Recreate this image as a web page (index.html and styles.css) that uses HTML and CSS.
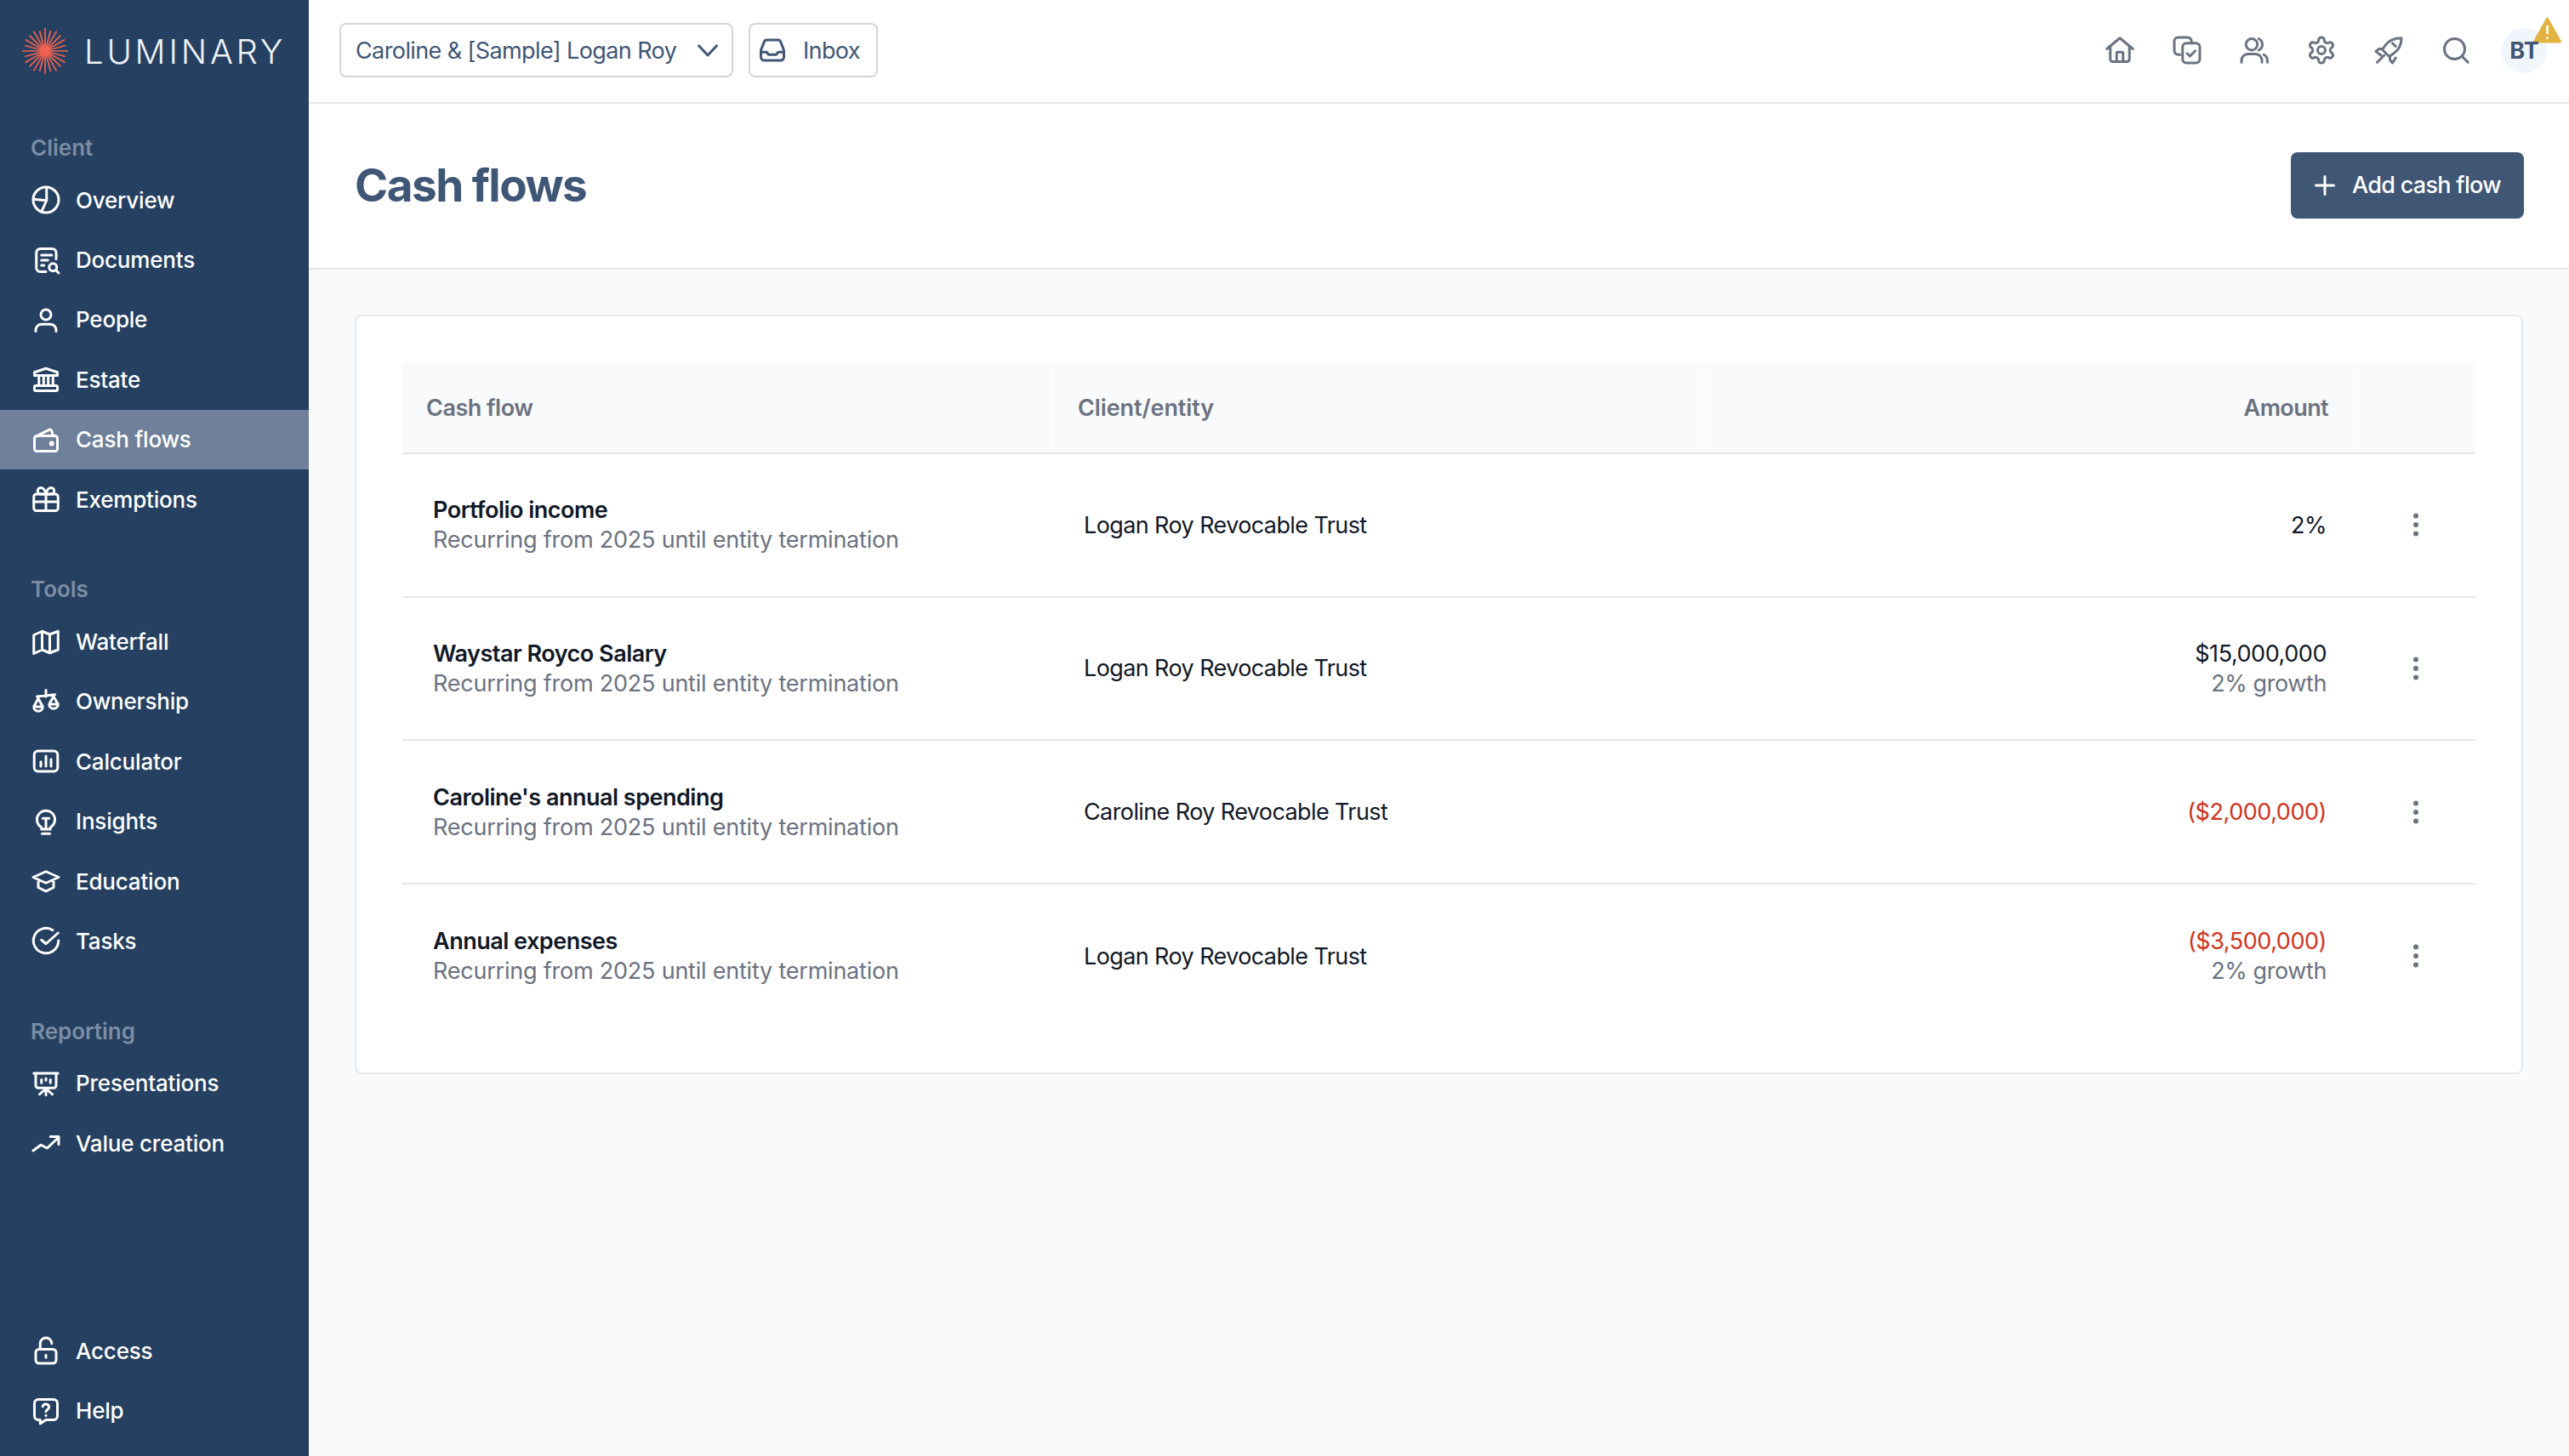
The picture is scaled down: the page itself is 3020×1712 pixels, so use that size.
FILE: index.html
```html
<!DOCTYPE html>
<html lang="en">

<head>
    <meta charset="UTF-8">
    <title>Cash flows</title>
    <link rel="stylesheet" href="styles.css">
</head>

<body>
    <aside class="sidebar">
        <div class="logo">
            <svg class="logo-mark" viewBox="0 0 54 54" stroke="#f0614f" stroke-width="1.7">
                <line x1="27" y1="0" x2="27" y2="54" />
                <line x1="20.5" y1="3" x2="33.5" y2="51" />
                <line x1="13.5" y1="3.6" x2="40.5" y2="50.4" />
                <line x1="8.6" y1="8.6" x2="45.4" y2="45.4" />
                <line x1="3.6" y1="13.5" x2="50.4" y2="40.5" />
                <line x1="3" y1="20.5" x2="51" y2="33.5" />
                <line x1="0" y1="27" x2="54" y2="27" />
                <line x1="3" y1="33.5" x2="51" y2="20.5" />
                <line x1="3.6" y1="40.5" x2="50.4" y2="13.5" />
                <line x1="8.6" y1="45.4" x2="45.4" y2="8.6" />
                <line x1="13.5" y1="50.4" x2="40.5" y2="3.6" />
                <line x1="20.5" y1="51" x2="33.5" y2="3" />
                <circle cx="27" cy="27" r="6" fill="#f0614f" stroke="none" />
            </svg>
            <span class="logo-text">LUMINARY</span>
        </div>

        <nav class="nav-group">
            <h3>Client</h3>
            <a class="nav-item">
                <svg class="icon" viewBox="0 0 24 24"><circle cx="12" cy="12" r="10" /><path d="M12.5 2.2V12.5L2.2 11.5M12.5 12.5L8.5 21.3" /></svg>
                Overview
            </a>
            <a class="nav-item">
                <svg class="icon" viewBox="0 0 24 24"><path d="M20 11V6a3 3 0 0 0-3-3H7.5a3 3 0 0 0-3 3v12a3 3 0 0 0 3 3H12M8.500 8h8M8.500 12h5M8.500 16h2" /><circle cx="17.5" cy="17.5" r="3" /><path d="M20 20l2 2" /></svg>
                Documents
            </a>
            <a class="nav-item">
                <svg class="icon" viewBox="0 0 24 24"><circle cx="12" cy="8" r="4" /><path d="M4 21v-1a4.5 4.5 0 0 1 4.5-4.5h7A4.5 4.5 0 0 1 20 20v1" /></svg>
                People
            </a>
            <a class="nav-item">
                <svg class="icon" viewBox="0 0 24 24"><path d="M3 9V6.5L12 3.500l9 3V9zM6.5 9.500v7M10.200 9.500v7M13.800 9.500v7M17.5 9.500v7" /><rect x="3" y="17" width="18" height="4" rx="1" /></svg>
                Estate
            </a>
            <a class="nav-item active">
                <svg class="icon" viewBox="0 0 24 24"><rect x="3" y="9" width="18" height="12" rx="2" /><path d="M4 9.500L14.500 4.200a1.500 1.500 0 0 1 2.100 1L17.5 9" /><circle cx="16.5" cy="15" r="1" /></svg>
                Cash flows
            </a>
            <a class="nav-item">
                <svg class="icon" viewBox="0 0 24 24"><rect x="2.5" y="8" width="19" height="13" rx="2" /><path d="M2.5 14h19M12 8v13M12 8H8a2.500 2.500 0 1 1 0-5c3 0 4 5 4 5zM12 8h4a2.500 2.500 0 1 0 0-5c-3 0-4 5-4 5z" /></svg>
                Exemptions
            </a>
        </nav>

        <nav class="nav-group">
            <h3>Tools</h3>
            <a class="nav-item">
                <svg class="icon" viewBox="0 0 24 24"><path d="M2.5 6.500L9 3.500l6 2.500 6.500-2.500V18L15 20.500 9 18l-6.500 3zM9 3.500V18M15 6v14.500" /></svg>
                Waterfall
            </a>
            <a class="nav-item">
                <svg class="icon" viewBox="0 0 24 24"><path d="M12 3v5M5 8l14-1.500M6 9.500L2.500 16a3.500 3.500 0 0 0 7 0zM2.500 16h7M18 8l-3.500 6a3.500 3.500 0 0 0 7 0zM14.500 14h7" /></svg>
                Ownership
            </a>
            <a class="nav-item">
                <svg class="icon" viewBox="0 0 24 24"><rect x="2.800" y="4" width="18.400" height="16" rx="3" /><path d="M8 12.500V16M12 8v8M16 10.500V16" /></svg>
                Calculator
            </a>
            <a class="nav-item">
                <svg class="icon" viewBox="0 0 24 24"><path d="M9 21.500h6M8.500 16.500a7 7 0 1 1 7 0v1.500h-7zM9.500 9.500h5M12 9.500v8" /></svg>
                Insights
            </a>
            <a class="nav-item">
                <svg class="icon" viewBox="0 0 24 24"><path d="M2 9l10-4.500L22 9l-10 4.500zM6 11v6l6 3 6-3v-6" /></svg>
                Education
            </a>
            <a class="nav-item">
                <svg class="icon" viewBox="0 0 24 24"><path d="M21.800 12a9.800 9.800 0 1 1-4.500-8.200M21.500 6L12 14.500l-3.500-3" /></svg>
                Tasks
            </a>
        </nav>

        <nav class="nav-group">
            <h3>Reporting</h3>
            <a class="nav-item">
                <svg class="icon" viewBox="0 0 24 24"><path d="M2.500 4h19M4 4v9.500a2 2 0 0 0 2 2h12a2 2 0 0 0 2-2V4M12 15.500v5.500M12 16l-5 4.500M12 16l5 4.500M8.500 9v2.500M12 8v1.500M15.500 9v2.500" /></svg>
                Presentations
            </a>
            <a class="nav-item">
                <svg class="icon" viewBox="0 0 24 24"><path d="M2 18l6-4.500 5 2.500 9-8.500M15.500 7H22v6" /></svg>
                Value creation
            </a>
        </nav>

        <nav class="nav-group nav-bottom">
            <a class="nav-item">
                <svg class="icon" viewBox="0 0 24 24"><rect x="4" y="11" width="16" height="11" rx="2.500" /><path d="M7.500 11V6.500a4.500 4.500 0 0 1 9 0M12 15.500v2" /></svg>
                Access
            </a>
            <a class="nav-item">
                <svg class="icon" viewBox="0 0 24 24"><path d="M6 3h12a3 3 0 0 1 3 3v10a3 3 0 0 1-3 3h-6l-4.500 3v-3H6a3 3 0 0 1-3-3V6a3 3 0 0 1 3-3zM9.500 8.500a2.500 2.500 0 0 1 4.900.6c0 1.700-2.400 1.900-2.400 3.400M12 15.500v.1" /></svg>
                Help
            </a>
        </nav>
    </aside>

    <div class="main">
        <header class="topbar">
            <button class="box-btn client-select">
                Caroline &amp; [Sample] Logan Roy
                <svg class="icon small" viewBox="0 0 24 24"><path d="M5 8.500l7 7.500 7-7.500" /></svg>
            </button>
            <button class="box-btn inbox">
                <svg class="icon" viewBox="0 0 24 24"><path d="M3 13.500h4.500l1.500 2h6l1.500-2H21" /><path d="M7.500 4h9a2 2 0 0 1 1.800 1.100L21 12v5.500a2.500 2.500 0 0 1-2.500 2.500h-13A2.500 2.500 0 0 1 3 17.500V12l2.700-6.900A2 2 0 0 1 7.500 4z" /></svg>
                Inbox
            </button>

            <div class="top-icons">
                <span class="top-icon"><svg class="icon" viewBox="0 0 24 24"><path d="M1.800 11L12 2.500 22.200 11M4.500 9v10a2 2 0 0 0 2 2h11a2 2 0 0 0 2-2V9M9.500 21v-6.500a1 1 0 0 1 1-1h3a1 1 0 0 1 1 1V21" /></svg></span>
                <span class="top-icon"><svg class="icon" viewBox="0 0 24 24"><path d="M6.500 15.500H5a3 3 0 0 1-3-3V5a3 3 0 0 1 3-3h7.500a3 3 0 0 1 3 3v1.500" /><rect x="8.500" y="6.500" width="13.500" height="15.500" rx="3" /><path d="M12 14.500l2.200 2.200 4.300-4.200" /></svg></span>
                <span class="top-icon"><svg class="icon" viewBox="0 0 24 24"><circle cx="10" cy="7.500" r="4.500" /><path d="M2 21.500V20a5 5 0 0 1 5-5h6a5 5 0 0 1 5 5v1.500M15.500 3a5 5 0 0 1 0 9M19.500 15.500a5 5 0 0 1 2.800 4.500v1.500" /></svg></span>
                <span class="top-icon"><svg class="icon" viewBox="0 0 24 24"><path d="M12.220 2h-.44a2 2 0 0 0-2 2v.18a2 2 0 0 1-1 1.730l-.43.250a2 2 0 0 1-2 0l-.15-.08a2 2 0 0 0-2.730.730l-.22.380a2 2 0 0 0 .730 2.730l.15.100a2 2 0 0 1 1 1.720v.510a2 2 0 0 1-1 1.740l-.15.090a2 2 0 0 0-.730 2.730l.22.380a2 2 0 0 0 2.730.730l.15-.08a2 2 0 0 1 2 0l.43.250a2 2 0 0 1 1 1.730V20a2 2 0 0 0 2 2h.44a2 2 0 0 0 2-2v-.18a2 2 0 0 1 1-1.730l.43-.25a2 2 0 0 1 2 0l.15.08a2 2 0 0 0 2.730-.730l.22-.39a2 2 0 0 0-.730-2.730l-.15-.08a2 2 0 0 1-1-1.740v-.5a2 2 0 0 1 1-1.740l.15-.09a2 2 0 0 0 .730-2.730l-.22-.38a2 2 0 0 0-2.730-.730l-.15.08a2 2 0 0 1-2 0l-.43-.25a2 2 0 0 1-1-1.730V4a2 2 0 0 0-2-2z" /><circle cx="12" cy="12" r="3" /></svg></span>
                <span class="top-icon"><svg class="icon" viewBox="0 0 24 24"><path d="M22 2.500c-5 0-9.500 1.500-12.500 5.500L7 11.500l5.500 5.500 3.500-2.500c4.500-3 6-7 6-12zM7.500 11H4.500l-2.500 2 4 3M13 16.500v3l2 2.500 2.500-4M3 21.500l5.500-5.500M15 6.500l2.500 2.500" /></svg></span>
                <span class="top-icon"><svg class="icon" viewBox="0 0 24 24"><circle cx="11" cy="11" r="8" /><path d="M21.500 21.500L16.800 16.800" /></svg></span>
                <span class="avatar">
                    <svg class="warning" viewBox="0 0 33 31"><path d="M16.500 2L31.500 29H1.500z" fill="#e3b341" stroke="#e3b341" stroke-width="3" stroke-linejoin="round" /><path d="M16.500 10v10M16.500 23.500v2.500" stroke="#fff6d8" stroke-width="3" /></svg>
                    <span class="avatar-text">BT</span>
                </span>
            </div>
        </header>

        <section class="page-head">
            <h1>Cash flows</h1>
            <button class="add-btn">
                <svg class="icon" viewBox="0 0 24 24"><path d="M12 5v14M5 12h14" /></svg>
                Add cash flow
            </button>
        </section>

        <section class="content">
            <div class="card">
                <div class="row head">
                    <div class="cell">Cash flow</div>
                    <div class="cell entity-head">Client/entity</div>
                    <div class="cell num">Amount</div>
                    <div class="cell"></div>
                </div>

                <div class="row">
                    <div class="cell">
                        <p class="name">Portfolio income</p>
                        <p class="sub">Recurring from 2025 until entity termination</p>
                    </div>
                    <div class="cell entity">Logan Roy Revocable Trust</div>
                    <div class="cell num">2%</div>
                    <div class="cell more"><svg class="icon dots" viewBox="0 0 24 24"><circle cx="12" cy="5" r="2" /><circle cx="12" cy="12" r="2" /><circle cx="12" cy="19" r="2" /></svg></div>
                </div>

                <div class="row">
                    <div class="cell">
                        <p class="name">Waystar Royco Salary</p>
                        <p class="sub">Recurring from 2025 until entity termination</p>
                    </div>
                    <div class="cell entity">Logan Roy Revocable Trust</div>
                    <div class="cell num">
                        <p>$15,000,000</p>
                        <p class="sub growth">2% growth</p>
                    </div>
                    <div class="cell more"><svg class="icon dots" viewBox="0 0 24 24"><circle cx="12" cy="5" r="2" /><circle cx="12" cy="12" r="2" /><circle cx="12" cy="19" r="2" /></svg></div>
                </div>

                <div class="row">
                    <div class="cell">
                        <p class="name">Caroline's annual spending</p>
                        <p class="sub">Recurring from 2025 until entity termination</p>
                    </div>
                    <div class="cell entity">Caroline Roy Revocable Trust</div>
                    <div class="cell num minus">($2,000,000)</div>
                    <div class="cell more"><svg class="icon dots" viewBox="0 0 24 24"><circle cx="12" cy="5" r="2" /><circle cx="12" cy="12" r="2" /><circle cx="12" cy="19" r="2" /></svg></div>
                </div>

                <div class="row last">
                    <div class="cell">
                        <p class="name">Annual expenses</p>
                        <p class="sub">Recurring from 2025 until entity termination</p>
                    </div>
                    <div class="cell entity">Logan Roy Revocable Trust</div>
                    <div class="cell num">
                        <p class="minus">($3,500,000)</p>
                        <p class="sub growth">2% growth</p>
                    </div>
                    <div class="cell more"><svg class="icon dots" viewBox="0 0 24 24"><circle cx="12" cy="5" r="2" /><circle cx="12" cy="12" r="2" /><circle cx="12" cy="19" r="2" /></svg></div>
                </div>
            </div>
        </section>
    </div>
</body>

</html>
```

FILE: styles.css
```css
* {
    box-sizing: border-box;
}

body {
    margin: 0;
    height: 1712px;
    display: flex;
    font-family: "Inter", "Liberation Sans", sans-serif;
    font-size: 27px;
    color: #111827;
    background-color: #f9fafb;
    overflow: hidden;
}

p,
h1,
h3 {
    margin: 0;
}

.icon {
    width: 36px;
    height: 36px;
    flex: none;
    fill: none;
    stroke: currentColor;
    stroke-width: 2;
    stroke-linecap: round;
    stroke-linejoin: round;
}

/* sidebar */
.sidebar {
    width: 363px;
    flex: none;
    display: flex;
    flex-direction: column;
    background-color: #254061;
    color: white;
    padding-bottom: 18px;
}

.logo {
    height: 120px;
    display: flex;
    align-items: center;
    padding-left: 26px;
    gap: 19px;
}

.logo-mark {
    width: 54px;
    height: 54px;
}

.logo-text {
    font-size: 40px;
    font-weight: 300;
    letter-spacing: 3.8px;
    color: #eef1f5;
}

.nav-group {
    margin-bottom: 52px;
}

.nav-group:nth-of-type(1) {
    margin-top: 35px;
}

.nav-group h3 {
    height: 38px;
    line-height: 38px;
    margin-bottom: 7px;
    padding-left: 36px;
    font-size: 26px;
    font-weight: 600;
    color: #7c8da4;
}

.nav-item {
    height: 70.4px;
    display: flex;
    align-items: center;
    gap: 17px;
    padding-left: 36px;
    font-weight: 500;
    font-size: 26px;
    letter-spacing: -0.2px;
}

.nav-item.active {
    background-color: #6f819a;
}

.nav-bottom {
    margin-top: auto;
    margin-bottom: 0;
}

/* top bar */
.main {
    flex: 1;
    min-width: 0;
}

.topbar {
    height: 122px;
    display: flex;
    align-items: center;
    gap: 18px;
    padding: 0 26px 2px 36px;
    background-color: white;
    border-bottom: 2px solid #e5e7eb;
}

.box-btn {
    height: 64px;
    display: flex;
    align-items: center;
    justify-content: space-between;
    background-color: white;
    border: 2px solid #d1d5db;
    border-radius: 8px;
    font: inherit;
    letter-spacing: -0.6px;
    white-space: nowrap;
    color: #3f5675;
}

.client-select {
    width: 463px;
    padding: 0 10px 0 17px;
}

.inbox {
    width: 152px;
    padding: 0 19px 0 8px;
}

.top-icons {
    margin-left: auto;
    display: flex;
    align-items: center;
    gap: 26px;
    color: #6b7280;
}

.top-icon {
    width: 53px;
    display: flex;
    justify-content: center;
}

.avatar {
    position: relative;
    width: 53px;
    height: 53px;
    margin-left: 2px;
    display: flex;
    align-items: center;
    justify-content: center;
    border-radius: 50%;
    background-color: #f1f6fd;
}

.avatar-text {
    position: relative;
    font-weight: 700;
    color: #3f5675;
}

.warning {
    position: absolute;
    left: 37px;
    top: -13px;
    width: 33px;
    height: 31px;
}

/* page head */
.page-head {
    height: 195px;
    display: flex;
    align-items: center;
    justify-content: space-between;
    padding: 0 53px 2px 54px;
    background-color: white;
    border-bottom: 2px solid #e5e7eb;
}

h1 {
    font-size: 53px;
    font-weight: 700;
    letter-spacing: -1.5px;
    color: #3f5675;
}

.add-btn {
    width: 274px;
    height: 78px;
    display: flex;
    align-items: center;
    gap: 14px;
    padding-left: 22px;
    border: none;
    border-radius: 8px;
    background-color: #3f5675;
    color: white;
    font: inherit;
    font-weight: 500;
    letter-spacing: -0.7px;
}

/* table */
.content {
    padding: 53px 54px;
}

.card {
    padding: 54px 54px 52px;
    background-color: white;
    border: 2px solid #e5e7eb;
    border-radius: 8px;
}

.row {
    display: grid;
    grid-template-columns: 764px 767px 765px 141px;
    height: 168.67px;
    border-bottom: 2px solid #e5e7eb;
}

.row.last {
    border-bottom: none;
}

.cell {
    display: flex;
    flex-direction: column;
    justify-content: center;
    padding: 0 36px;
    line-height: 35px;
}

.cell.num {
    align-items: flex-end;
    padding-right: 34px;
    letter-spacing: -0.45px;
}

.entity {
    padding-left: 37px;
    letter-spacing: -0.6px;
}

.minus {
    color: #d0341f;
}

.name {
    font-weight: 600;
    letter-spacing: -0.5px;
}

.sub {
    letter-spacing: -0.22px;
    color: #6b7280;
}

.sub.growth {
    letter-spacing: -0.4px;
}

.more {
    align-items: center;
    color: #6b7280;
}

.dots {
    fill: currentColor;
    stroke: none;
}

.head {
    height: 108px;
    background-color: #f9fafb;
}

.head .cell {
    padding: 0 30px 0 28px;
    font-weight: 600;
    letter-spacing: -0.5px;
    color: #6b7280;
    border-right: 2px solid #fdfdfe;
}

.head .cell.num {
    padding-right: 30px;
    letter-spacing: -0.6px;
}

.head .cell.entity-head {
    padding-left: 30px;
    letter-spacing: -0.1px;
}

.head .cell:last-child {
    border-right: none;
}
```
